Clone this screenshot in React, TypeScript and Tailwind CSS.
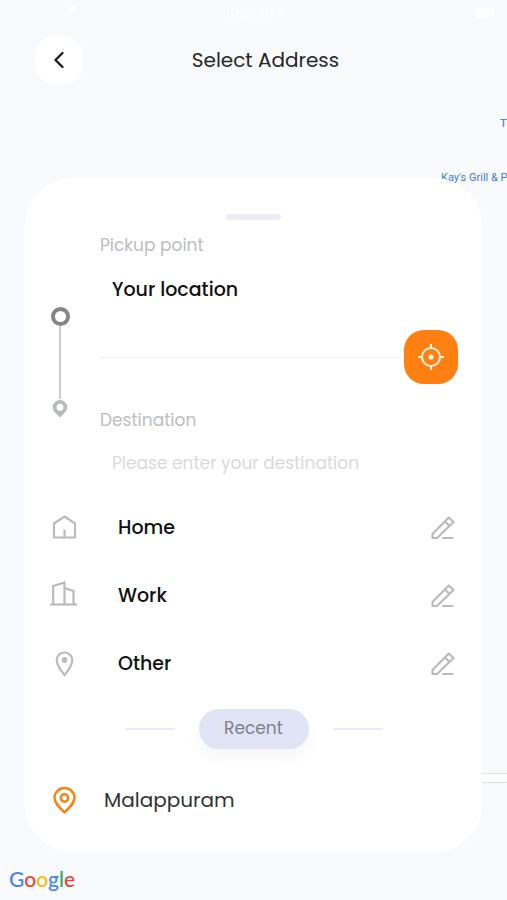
import { ChevronLeft, Navigation } from 'lucide-react';

const savedPlaces = [
  { id: 'home', label: 'Home', icon: HomeIcon },
  { id: 'work', label: 'Work', icon: WorkIcon },
  { id: 'other', label: 'Other', icon: OtherIcon },
];

const recentPlaces = ['Malappuram'];

function HomeIcon() {
  return (
    <svg width="31" height="31" viewBox="0 0 31 31" fill="none" stroke="#bbbbbb" strokeWidth="2.200" strokeLinejoin="round" aria-hidden="true">
      <path d="M5 10.500 15.500 3.500 26 10.500V24.500H5Z" />
      <path d="M15.500 16.500v8" />
    </svg>
  );
}

function WorkIcon() {
  return (
    <svg width="31" height="31" viewBox="0 0 31 31" fill="none" stroke="#bbbbbb" strokeWidth="2.200" aria-hidden="true">
      <path d="M4.200 23.500V5L15.500 1.500v22" />
      <path d="M15.500 7l9 3v13.500" />
      <path d="M1 23.500h27" />
    </svg>
  );
}

function OtherIcon() {
  return (
    <svg width="31" height="31" viewBox="0 0 31 31" fill="none" aria-hidden="true">
      <path d="M15.500 26C11.500 21 7.700 16.500 7.700 11.500a7.800 8 0 0 1 15.600 0c0 5-3.800 9.500-7.800 14.500Z" stroke="#bbbbbb" strokeWidth="2.200" />
      <circle cx="15.500" cy="11" r="2.900" fill="#bbbbbb" />
    </svg>
  );
}

function RecentPinIcon() {
  return (
    <svg width="31" height="31" viewBox="0 0 31 31" fill="none" stroke="#f98417" strokeWidth="2.500" aria-hidden="true">
      <path d="M15.500 27.500C10 22 5.500 18 5.500 12.800a10 9.800 0 0 1 20 0c0 5.200-4.500 9.200-10 14.700Z" strokeLinejoin="round" />
      <circle cx="15.500" cy="13" r="3.700" />
    </svg>
  );
}

function PencilIcon() {
  return (
    <svg width="26" height="26" viewBox="0 0 26 26" fill="none" stroke="#bbbbbb" strokeWidth="2.200" strokeLinejoin="round" aria-hidden="true">
      <path d="M2.500 23v-4L18.800 2.500l4.700 4.500L7 23Z" />
      <path d="M15 6.500l4.500 4.500" />
      <path d="M13 23h9.500" strokeLinecap="round" />
    </svg>
  );
}

function TargetIcon() {
  return (
    <svg width="28" height="28" viewBox="0 0 28 28" fill="none" stroke="#fff3e6" strokeWidth="2" aria-hidden="true">
      <circle cx="14" cy="14" r="9" />
      <path d="M14 1v5M14 22v5M1 14h5M22 14h5" />
      <circle cx="14" cy="14" r="2.600" fill="#fff3e6" stroke="none" />
    </svg>
  );
}

function MapBackground() {
  return (
    <div className="absolute inset-0 overflow-hidden font-['Roboto',sans-serif]" aria-hidden="true">
      <span className="absolute top-[116px] left-[500px] text-[11px] leading-4 font-medium text-[#4f87e0]">T</span>
      <span className="absolute top-[170px] left-[441px] text-[11px] leading-4 whitespace-nowrap text-[#3f7de0]">
        Kay&apos;s Grill &amp; P
      </span>
      <div className="absolute top-[773px] right-0 h-[10px] w-32 border-y border-[#dfe2e4] bg-white" />
    </div>
  );
}

function StatusBar() {
  return (
    <div className="flex h-9 items-start justify-between px-3 pt-1 text-[13px] leading-[18px] font-semibold text-white">
      <span className="flex w-16 justify-end pt-px">
        <Navigation size={11} fill="currentColor" />
      </span>
      <span className="opacity-70">10:23 AM</span>
      <span className="flex w-16 justify-end pt-1">
        <span className="h-[10px] w-5 rounded-[4px] bg-white" />
      </span>
    </div>
  );
}

function TripTrack() {
  return (
    <div className="flex w-[22px] flex-col items-center pt-[74px]" aria-hidden="true">
      <span className="size-[19px] rounded-full border-4 border-[#858585]" />
      <span className="h-[73px] w-[2px] bg-[#cccccc]" />
      <svg width="16" height="19" viewBox="0 0 16 19">
        <path
          fillRule="evenodd"
          fill="#b9bbbb"
          d="M8 1a7.300 7.300 0 0 1 7.300 7.300c0 2.800-1.500 4.600-3.300 6.200L8 18.500 4 14.500C2.200 12.900.7 11.100.7 8.300A7.300 7.300 0 0 1 8 1Zm0 3.800a3.500 3.500 0 1 0 0 7 3.500 3.500 0 0 0 0-7Z"
        />
      </svg>
    </div>
  );
}

function TripForm() {
  return (
    <form className="mt-[13px] flex gap-[29px]">
      <TripTrack />
      <div className="flex min-w-0 flex-1 flex-col">
        <label htmlFor="pickup" className="text-[17px] leading-6 text-[#bcbdc0]">
          Pickup point
        </label>
        <input
          id="pickup"
          type="text"
          defaultValue="Your location"
          className="mt-3 h-10 w-full bg-transparent pl-3 text-[19px] font-medium text-[#111111] outline-none"
        />
        <div className="mt-[21px] flex items-center">
          <div className="h-px flex-1 bg-[#f2f2f2]" />
          <button
            type="button"
            aria-label="Use current location"
            className="flex size-[54px] items-center justify-center rounded-[20px] bg-[#ff7f11]"
          >
            <TargetIcon />
          </button>
        </div>
        <label htmlFor="destination" className="mt-6 text-[17px] leading-6 text-[#bcbdc0]">
          Destination
        </label>
        <input
          id="destination"
          type="text"
          placeholder="Please enter your destination"
          className="mt-[11px] h-10 w-full bg-transparent pl-3 text-[17px] text-[#1c1c1c] outline-none placeholder:text-[#dadada]"
        />
      </div>
    </form>
  );
}

export default function App() {
  return (
    <div className="relative flex min-h-screen flex-col bg-[#f8fafc] font-['Poppins','Inter',sans-serif]">
      <MapBackground />

      <div className="relative flex flex-1 flex-col">
        <StatusBar />

        {/* Header */}
        <header className="flex items-center justify-between px-[35px]">
          <button
            type="button"
            aria-label="Back"
            className="flex size-12 items-center justify-center rounded-[20px] bg-white text-[#1c1c1c]"
          >
            <ChevronLeft size={28} strokeWidth={2} />
          </button>
          <h1 className="text-[20px] leading-7 text-[#262626]">Select Address</h1>
          <span className="w-6" />
        </header>

        {/* Address sheet */}
        <main className="mx-[25px] mt-[94px] rounded-[48px] bg-white px-6 pt-9 pb-[25px]">
          <div className="mx-auto h-[6px] w-[55px] rounded-full bg-[#ededf6]" />

          <TripForm />

          <ul className="mt-[11px]">
            {savedPlaces.map((place) => (
              <li key={place.id} className="flex h-[68px] items-center">
                <place.icon />
                <span className="ml-[38px] flex-1 text-[19px] leading-7 font-medium text-[#111111]">{place.label}</span>
                <button type="button" aria-label={`Edit ${place.label}`} className="mr-[2px]">
                  <PencilIcon />
                </button>
              </li>
            ))}
          </ul>

          <div className="mt-[11px] flex items-center justify-center gap-6">
            <span className="h-[2px] w-[50px] bg-[#ebecf8]" />
            <h2 className="flex h-10 w-[110px] items-center justify-center rounded-full bg-[#e1e4f5] text-[17px] text-[#7c7f8c] shadow-[0_8px_16px_rgba(0,0,0,0.04)]">
              Recent
            </h2>
            <span className="h-[2px] w-[50px] bg-[#ebecf8]" />
          </div>

          <ul className="mt-6">
            {recentPlaces.map((place) => (
              <li key={place}>
                <button type="button" className="flex h-[54px] w-full items-center gap-6 text-left text-[20px] text-[#333333]">
                  <RecentPinIcon />
                  {place}
                </button>
              </li>
            ))}
          </ul>
        </main>

        <footer className="px-[9px] pt-[13px] font-['Lato',sans-serif] text-[21px] leading-7 font-medium" aria-label="Google">
          <span className="text-[#4285f4]">G</span>
          <span className="text-[#ea4335]">o</span>
          <span className="text-[#fbbc05]">o</span>
          <span className="text-[#4285f4]">g</span>
          <span className="text-[#34a853]">l</span>
          <span className="text-[#ea4335]">e</span>
        </footer>
      </div>
    </div>
  );
}
